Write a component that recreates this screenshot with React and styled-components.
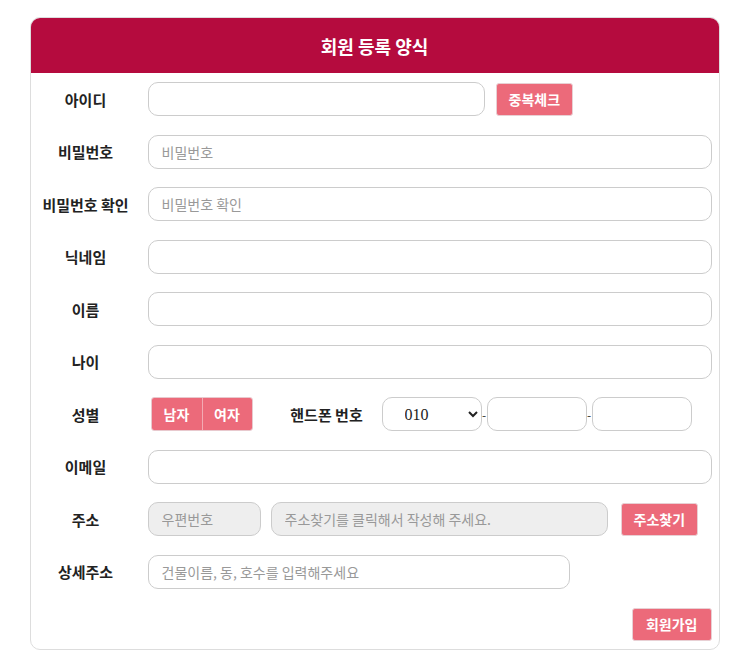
import styled, { createGlobalStyle } from 'styled-components';

const GlobalStyle = createGlobalStyle`
  body {
    margin: 8px;
    background: #fff;
    font-family: 'Noto Sans CJK KR', 'Noto Sans', sans-serif;
    color: #222;
  }
`;

const Card = styled.div`
  width: 688px;
  margin: 9px auto 0;
  border: 1px solid #ddd;
  border-radius: 10px;
  overflow: hidden;
  background: #fff;
`;

const Header = styled.div`
  height: 55px;
  background: #b50b3e;
  color: #fff;
  font-size: 18px;
  font-weight: 700;
  display: flex;
  align-items: center;
  justify-content: center;
`;

const Form = styled.form`
  display: flex;
  flex-direction: column;
  gap: 18.5px;
  padding: 9px 7px 8px 0;
`;

const Row = styled.div`
  display: flex;
  align-items: center;
  height: 34px;
`;

const Label = styled.label`
  width: ${(p) => p.$w || 110}px;
  flex-shrink: 0;
  text-align: center;
  font-size: 15px;
  font-weight: 700;
  color: #222;
  margin-right: ${(p) => p.$mr ?? 7}px;
`;

const Input = styled.input`
  box-sizing: border-box;
  height: 34px;
  width: ${(p) => (p.$w ? `${p.$w}px` : 'auto')};
  flex: ${(p) => (p.$w ? '0 0 auto' : '1')};
  border: 1px solid #ccc;
  border-radius: 10px;
  padding: 0 13px;
  font-family: 'Noto Sans CJK KR', sans-serif;
  font-size: 14px;
  background: ${(p) => (p.$gray ? '#eee' : '#fff')};
  outline: none;
  &::placeholder {
    color: #999;
  }
`;

const Button = styled.button`
  height: 33px;
  padding: 0 ${(p) => p.$px || 12}px;
  background: #ec6a7a;
  color: #fff;
  border: 1px solid #e8d0d4;
  border-radius: 3px;
  font-family: 'Noto Sans CJK KR', sans-serif;
  font-size: 14px;
  font-weight: 700;
  cursor: pointer;
`;

const Toggle = styled.div`
  display: flex;
  margin-left: 3px;
  border-radius: 3px;
  overflow: hidden;
  border: 1px solid #e8c9ce;
`;

const ToggleBtn = styled.button`
  width: 50px;
  height: 32px;
  background: #ec6a7a;
  color: #fff;
  border: none;
  border-left: ${(p) => (p.$first ? 'none' : '1px solid #f3aab3')};
  font-family: 'Noto Sans CJK KR', sans-serif;
  font-size: 14px;
  font-weight: 700;
  padding: 0;
`;

const Select = styled.select`
  box-sizing: border-box;
  width: 100px;
  height: 34px;
  border: 1px solid #ccc;
  border-radius: 10px;
  padding: 0 0 0 18px;
  font-family: 'Liberation Serif', serif;
  font-size: 16px;
  background: #fff;
  color: #222;
`;

const Dash = styled.span`
  width: 5px;
  text-align: center;
  font-size: 12px;
  color: #333;
`;

const Footer = styled.div`
  display: flex;
  justify-content: flex-end;
  height: 34px;
  align-items: center;
`;

export default function App() {
  return (
    <>
      <GlobalStyle />
      <Card>
        <Header>회원 등록 양식</Header>
        <Form onSubmit={(e) => e.preventDefault()}>
          <Row>
            <Label>아이디</Label>
            <Input $w={337} />
            <Button type="button" style={{ marginLeft: 11 }}>중복체크</Button>
          </Row>
          <Row>
            <Label>비밀번호</Label>
            <Input type="password" placeholder="비밀번호" />
          </Row>
          <Row>
            <Label>비밀번호 확인</Label>
            <Input type="password" placeholder="비밀번호 확인" />
          </Row>
          <Row>
            <Label>닉네임</Label>
            <Input />
          </Row>
          <Row>
            <Label>이름</Label>
            <Input />
          </Row>
          <Row>
            <Label>나이</Label>
            <Input />
          </Row>
          <Row>
            <Label>성별</Label>
            <Toggle>
              <ToggleBtn type="button" $first>남자</ToggleBtn>
              <ToggleBtn type="button">여자</ToggleBtn>
            </Toggle>
            <Label $w={110} $mr={0} style={{ marginLeft: 19 }}>핸드폰 번호</Label>
            <Select defaultValue="010">
              <option>010</option>
              <option>011</option>
              <option>016</option>
            </Select>
            <Dash>-</Dash>
            <Input $w={100} />
            <Dash>-</Dash>
            <Input $w={100} />
          </Row>
          <Row>
            <Label>이메일</Label>
            <Input type="email" />
          </Row>
          <Row>
            <Label>주소</Label>
            <Input $w={113} $gray placeholder="우편번호" readOnly />
            <Input $w={337} $gray placeholder="주소찾기를 클릭해서 작성해 주세요." readOnly style={{ marginLeft: 10 }} />
            <Button type="button" style={{ marginLeft: 13 }} $px={12}>주소찾기</Button>
          </Row>
          <Row>
            <Label>상세주소</Label>
            <Input $w={422} placeholder="건물이름, 동, 호수를 입력해주세요" />
          </Row>
          <Footer>
            <Button type="submit" $px={13}>회원가입</Button>
          </Footer>
        </Form>
      </Card>
    </>
  );
}
